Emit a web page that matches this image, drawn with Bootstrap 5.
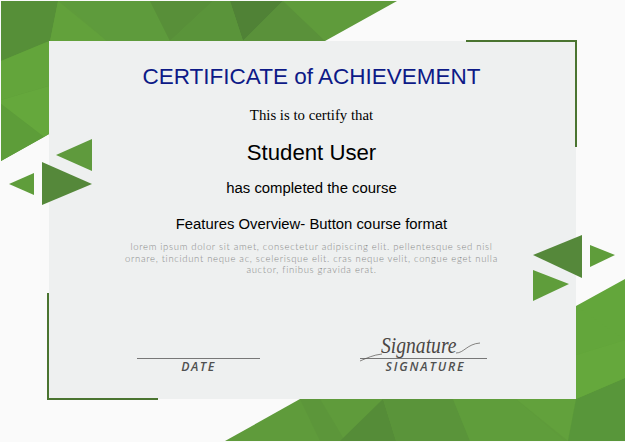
<!DOCTYPE html>
<html lang="en">
<head>
<meta charset="utf-8">
<title>Certificate</title>
<link href="https://cdn.jsdelivr.net/npm/bootstrap@5.3.0/dist/css/bootstrap.min.css" rel="stylesheet">
<style>
html,body{margin:0;background:#fafafa;overflow:hidden}
.cert-page{width:625px;height:442px;overflow:hidden}
.cert-art{left:0;top:0;width:625px;height:442px}
.cert-body{z-index:1;margin:0 51px 0 49px;height:442px;padding-top:63px;font-family:"Liberation Sans",Arial,sans-serif;color:#000}
.cert-title{font-size:22.5px;line-height:28px;color:#0d1a87;margin:0}
.cert-intro{font-family:"Liberation Serif","Times New Roman",serif;font-size:14.8px;line-height:18px;margin:15px 0 0}
.cert-name{font-size:22.2px;line-height:28px;margin:15px 0 0}
.cert-done{font-size:14.9px;line-height:18px;margin:12px 0 0}
.cert-course{font-size:14.85px;line-height:18px;margin:18px 0 0}
.cert-lorem{font-family:Lato,"Open Sans",sans-serif;font-weight:300;font-size:9.5px;line-height:11.5px;letter-spacing:.68px;color:#888;width:380px;margin:8px auto 0}
.cert-sigs{margin-top:82px;padding:0 87px 0 88px}
.cert-sig{border-top:1px solid #777;font-family:"Open Sans",sans-serif;font-weight:600;font-style:italic;font-size:12.3px;line-height:16px;letter-spacing:1.5px;color:#505050}
.sig-date{width:123px}
.sig-name{width:127px;letter-spacing:1.85px;padding-left:4px}
.sig-hand{left:21px;bottom:18px;font-family:"Liberation Serif",serif;font-style:italic;font-weight:400;font-size:20px;line-height:20px;letter-spacing:0;color:#4a4644;white-space:nowrap;transform:scale(.98,1.2);transform-origin:left bottom}
.sig-flourish{left:-2px;top:-23px;width:125px;height:30px}
</style>
</head>
<body>
<div class="cert-page position-relative">
<svg class="cert-art position-absolute" viewBox="0 0 625 442" aria-hidden="true">
  <rect width="625" height="442" fill="#fafafa"/>
  <polygon points="1,1 397,1 325,41 49,41 49,134 1,161" fill="#5f9b3b"/>
  <polygon points="1,1 58,1 50,41 1,61" fill="#568f38"/>
  <polygon points="58,1 50,41 107,41" fill="#62a13b"/>
  <polygon points="107,41 63,1 150,1 170,41" fill="#5e9b3c"/>
  <polygon points="150,1 213,1 170,41" fill="#588f39"/>
  <polygon points="230,1 283,1 243,41" fill="#508236"/>
  <polygon points="170,41 213,1 230,1 243,41" fill="#5a943a"/>
  <polygon points="283,1 243,41 325,41" fill="#5a913a"/>
  <polygon points="1,61 49,41 49,86 1,100" fill="#63a53b"/>
  <polygon points="1,100 49,86 49,134 44,137 1,104" fill="#65a83c"/>
  <polygon points="1,104 44,137 1,161" fill="#5d9d39"/>
  <polygon points="225,441 300,399 625,399 625,441" fill="#5f9b3b"/>
  <polygon points="300,399 320,399 345,441 320,441" fill="#5c963a"/>
  <polygon points="340,441 383,399 396,441" fill="#558c38"/>
  <polygon points="383,399 453,399 470,441 396,441" fill="#5a943a"/>
  <polygon points="453,399 516,399 565,441 470,441" fill="#5f9d3b"/>
  <polygon points="516,399 576,399 568,441" fill="#62a13c"/>
  <polygon points="576,306 625,279 625,441 568,441 576,399" fill="#63a63b"/>
  <polygon points="576,399 625,378 625,441 568,441" fill="#58963a"/>
  <polygon points="576,355 625,340 625,378 576,399" fill="#65a83c"/>
  <polygon points="576,306 625,340 576,355" fill="#63a63b"/>
  <rect x="49" y="41" width="527" height="358" fill="#eef0f0"/>
  <polygon points="92,139 92,171 56,155" fill="#5f9a3d"/>
  <polygon points="42,162 42,205 92,184" fill="#55883a"/>
  <polygon points="34,173 34,195 9,184" fill="#5f9d3b"/>
  <polygon points="582,235 582,278 533,255" fill="#55883a"/>
  <polygon points="590,245 590,267 615,255" fill="#5f9d3b"/>
  <polygon points="533,270 533,301 569,284" fill="#5f9d3b"/>
  <polyline points="466,41 576,41 576,147" fill="none" stroke="#4a7430" stroke-width="2"/>
  <polyline points="48,293 48,399 158,399" fill="none" stroke="#4a7430" stroke-width="2"/>
</svg>
<main class="cert-body position-relative d-flex flex-column text-center">
  <h1 class="cert-title fw-normal">CERTIFICATE of ACHIEVEMENT</h1>
  <p class="cert-intro">This is to certify that</p>
  <h2 class="cert-name fw-normal">Student User</h2>
  <p class="cert-done">has completed the course</p>
  <p class="cert-course">Features Overview- Button course format</p>
  <p class="cert-lorem">lorem ipsum dolor sit amet, consectetur adipiscing elit. pellentesque sed nisl ornare, tincidunt neque ac, scelerisque elit. cras neque velit, congue eget nulla auctor, finibus gravida erat.</p>
  <div class="cert-sigs d-flex justify-content-between">
    <div class="cert-sig sig-date">DATE</div>
    <div class="cert-sig sig-name position-relative">SIGNATURE
      <span class="sig-hand position-absolute">Signature</span>
      <svg class="sig-flourish position-absolute" viewBox="0 0 125 30" aria-hidden="true"><path d="M2 25C9 22 15 19 24 18M98 17C106 17 109 8 122 7" fill="none" stroke="#55514f" stroke-width=".7"/></svg>
    </div>
  </div>
</main>
</div>
<script src="https://cdn.jsdelivr.net/npm/bootstrap@5.3.0/dist/js/bootstrap.bundle.min.js"></script>
</body>
</html>
